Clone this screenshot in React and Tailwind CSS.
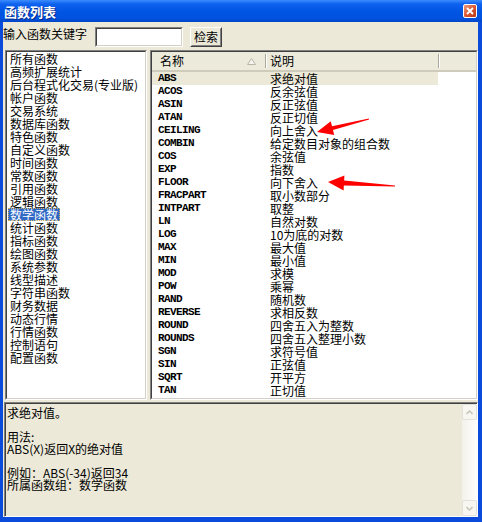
import React from "react";

const groups = [
  "所有函数", "高频扩展统计", "后台程式化交易(专业版)", "帐户函数", "交易系统", "数据库函数",
  "特色函数", "自定义函数", "时间函数", "常数函数", "引用函数", "逻辑函数", "数学函数",
  "统计函数", "指标函数", "绘图函数", "系统参数", "线型描述", "字符串函数", "财务数据",
  "动态行情", "行情函数", "控制语句", "配置函数",
];

const funcs = [
  ["ABS", "求绝对值"], ["ACOS", "反余弦值"], ["ASIN", "反正弦值"], ["ATAN", "反正切值"],
  ["CEILING", "向上舍入"], ["COMBIN", "给定数目对象的组合数"], ["COS", "余弦值"], ["EXP", "指数"],
  ["FLOOR", "向下舍入"], ["FRACPART", "取小数部分"], ["INTPART", "取整"], ["LN", "自然对数"],
  ["LOG", "10为底的对数"], ["MAX", "最大值"], ["MIN", "最小值"], ["MOD", "求模"], ["POW", "乘幂"],
  ["RAND", "随机数"], ["REVERSE", "求相反数"], ["ROUND", "四舍五入为整数"],
  ["ROUNDS", "四舍五入整理小数"], ["SGN", "求符号值"], ["SIN", "正弦值"], ["SQRT", "开平方"],
  ["TAN", "正切值"],
];

const help = ["求绝对值。", "", "用法:", "ABS(X)返回X的绝对值", "", "例如：ABS(-34)返回34", "所属函数组：数学函数"];

// classic 2px sunken frame
const Sunken = ({ className = "", inner = "", children }) => (
  <div className={`border border-[#808080] border-b-white border-r-white ${className}`}>
    <div className={`h-full border border-[#404040] border-b-[#d4d0c8] border-r-[#d4d0c8] ${inner}`}>{children}</div>
  </div>
);

const HeaderDivider = () => (
  <div className="self-center h-[14px] w-[2px] border-l border-[#aca899] border-r border-r-white" />
);

const ScrollBtn = ({ up }) => (
  <div className="h-[16px] w-[15px] rounded-[2px] border border-[#e3e1d8] bg-[#f7f6f1] flex items-center justify-center">
    <svg width="7" height="5" viewBox="0 0 7 5">
      <polyline points={up ? "0.5,4 3.5,1 6.5,4" : "0.5,1 3.5,4 6.5,1"} fill="none" stroke="#c9c7ba" strokeWidth="1.6" />
    </svg>
  </div>
);

export default function App() {
  return (
    <div className="relative w-[482px] h-[522px] flex flex-col text-[12px] text-black font-['Noto_Sans_CJK_SC','Liberation_Sans',sans-serif] select-none">
      {/* title bar */}
      <div className="h-[22px] flex items-center pl-[4px] pr-[5px] bg-[linear-gradient(180deg,#3b8cff_0%,#0f62ee_18%,#0055e3_50%,#0051de_85%,#0046c6_100%)]">
        <span className="text-white font-bold text-[13px] leading-[13px] [text-shadow:1px_1px_#0a2c8a]">函数列表</span>
        <div className="ml-auto w-[14px] h-[14px] rounded-[2px] border border-white bg-[linear-gradient(135deg,#ec9a7c,#d9542e_55%,#b8391a)] flex items-center justify-center">
          <svg width="8" height="8" viewBox="0 0 8 8">
            <path d="M1 1 L7 7 M7 1 L1 7" stroke="white" strokeWidth="1.8" />
          </svg>
        </div>
      </div>

      {/* body */}
      <div className="flex-1 flex flex-col bg-[#ece9d8] border-l-[3px] border-r-4 border-b-[5px] border-[#0b4bdc]">
        {/* search row */}
        <div className="h-[28px] flex items-start pt-[5px]">
          <span className="w-[92px] mt-[1px] leading-[12px]">输入函数关键字</span>
          <Sunken className="w-[88px] h-[20px]" inner="bg-white" />
          <div className="ml-[7px] w-[32px] h-[20px] border border-white border-b-[#404040] border-r-[#404040]">
            <div className="h-full border border-transparent border-b-[#808080] border-r-[#808080] flex items-center justify-center leading-[12px]">
              检索
            </div>
          </div>
        </div>

        {/* lists */}
        <div className="h-[350px] flex pl-[2px] gap-[3px]">
          <Sunken className="w-[142px] h-full" inner="bg-white pl-[1px] overflow-hidden">
            {groups.map((g, i) => (
              <div key={g} className="h-[13px] leading-[13px] whitespace-nowrap">
                <span
                  className={`inline-block h-[13px] px-[2px] ${i === 12 ? "bg-[#316ac5] text-white outline-1 outline-dotted outline-[#d8b060] -outline-offset-1" : ""}`}
                >
                  {g}
                </span>
              </div>
            ))}
          </Sunken>

          <Sunken className="flex-1 h-full" inner="bg-white overflow-hidden">
            <div className="h-[20px] flex bg-[#ebeadb] border-b-2 border-[#cfcbbb]">
              <div className="w-[113px] flex items-center pl-[8px] pr-[9px]">
                <span className="leading-[12px]">名称</span>
                <svg className="ml-auto" width="9" height="7" viewBox="0 0 9 7">
                  <polygon points="4.5,0.5 8.5,6.5 0.5,6.5" fill="#f4f3ee" stroke="#b9b6a8" />
                </svg>
              </div>
              <HeaderDivider />
              <div className="w-[171px] flex items-center pl-[3px]">
                <span className="leading-[12px]">说明</span>
              </div>
              <HeaderDivider />
            </div>
            {funcs.map(([n, d], i) => (
              <div key={n} className={`h-[13px] w-[286px] flex leading-[13px] ${i === 0 ? "bg-[#ece9d8]" : ""}`}>
                <span className="w-[118px] pl-[6px] font-['Liberation_Mono',monospace] font-bold text-[11px] tracking-[-0.6px]">{n}</span>
                <span className="whitespace-nowrap">{d}</span>
              </div>
            ))}
          </Sunken>
        </div>

        {/* help text */}
        <Sunken className="mt-[2px] ml-[1px] flex-1" inner="flex bg-[#ece9d8] border-r-0 border-b-0">
          <div className="flex-1 pl-[1px] pt-[3px]">
            {help.map((l, i) => (
              <div key={i} className="h-[12px] leading-[12px] whitespace-pre">{l}</div>
            ))}
          </div>
          <div className="w-[15px] flex flex-col justify-between bg-[linear-gradient(90deg,#f3f1ea,#fefefe)]">
            <ScrollBtn up />
            <ScrollBtn />
          </div>
        </Sunken>
      </div>

      {/* red annotation arrows drawn over the list */}
      <svg className="absolute inset-0 pointer-events-none" width="482" height="522" viewBox="0 0 482 522">
        <polygon
          fill="#ff0000"
          points="317,132 330.8,121.3 332,126.2 368.9,118.5 369.1,119.5 333,130 334.2,134.9"
        />
        <polygon
          fill="#ff0000"
          points="328,182 344.4,175.5 344.15,180.5 395,185.4 395,186.6 343.85,185.4 343.6,190.4"
        />
      </svg>
    </div>
  );
}
